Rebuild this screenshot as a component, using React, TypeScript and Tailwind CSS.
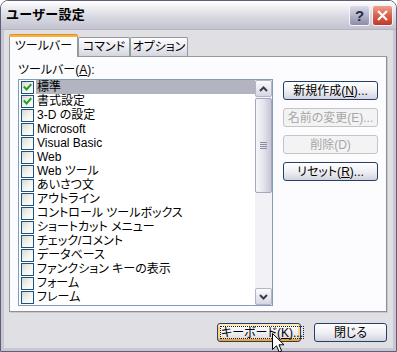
import React from "react";

type Item = { label: string; checked?: boolean; selected?: boolean };

const items: Item[] = [
  { label: "標準", checked: true, selected: true },
  { label: "書式設定", checked: true },
  { label: "3-D の設定" },
  { label: "Microsoft" },
  { label: "Visual Basic" },
  { label: "Web" },
  { label: "Web ツール" },
  { label: "あいさつ文" },
  { label: "アウトライン" },
  { label: "コントロール ツールボックス" },
  { label: "ショートカット メニュー" },
  { label: "チェック/コメント" },
  { label: "データベース" },
  { label: "ファンクション キーの表示" },
  { label: "フォーム" },
  { label: "フレーム" },
];

function Check({ checked }: { checked?: boolean }) {
  return (
    <span className="w-[13px] h-[13px] shrink-0 border border-[#1c5180] bg-gradient-to-br from-[#d8d8d2] via-[#f2f2ef] to-[#ffffff] flex items-center justify-center">
      {checked && (
        <svg width="9" height="9" viewBox="0 0 9 9">
          <path d="M1.5 4.2 L3.6 6.4 L7.6 1.8" stroke="#21a121" strokeWidth="2" fill="none" strokeLinecap="square" />
        </svg>
      )}
    </span>
  );
}

function Btn({
  children,
  disabled,
  className = "",
}: {
  children: React.ReactNode;
  disabled?: boolean;
  className?: string;
}) {
  const base = disabled
    ? "border-[#c4c4c8] bg-[#f3f3f3] text-[#a6a6a8]"
    : "border-[#22406a] bg-gradient-to-b from-[#ffffff] via-[#f0f0f4] to-[#d3d3de] text-black";
  return (
    <div className={`h-[19px] rounded-[3px] border flex items-center justify-center whitespace-nowrap ${base} ${className}`}>
      {children}
    </div>
  );
}

function Chevron({ up }: { up?: boolean }) {
  return (
    <svg width="9" height="6" viewBox="0 0 9 6">
      <path
        d={up ? "M1 5 L4.5 1.5 L8 5" : "M1 1 L4.5 4.5 L8 1"}
        stroke="#3c3c50"
        strokeWidth="2"
        fill="none"
      />
    </svg>
  );
}

export default function App() {
  return (
    <div className="w-[397px] h-[352px] bg-white relative overflow-hidden font-['Liberation_Sans','Noto_Sans_CJK_JP',sans-serif] text-[12px] leading-[14px] text-black">
      <div className="w-full h-full flex flex-col rounded-t-[8px] border border-[#5e5e78] overflow-hidden">
        {/* Title bar */}
        <div className="h-[29px] shrink-0 flex items-center pl-[5px] pr-[3px] bg-gradient-to-b from-[#ffffff] via-[#dcdce5] to-[#c3c3d0] border-b border-[#b5b5c4]">
          <span className="flex-1 text-[13px] font-bold leading-[16px] tracking-[0.2px]">ユーザー設定</span>
          <div className="w-[21px] h-[21px] rounded-[3px] border border-[#f4f4f8] bg-gradient-to-b from-[#dcdcea] via-[#b4b4cc] to-[#8c8caa] flex items-center justify-center text-[15px] font-bold text-[#2a2a3c] leading-none">
            ?
          </div>
          <div className="w-[21px] h-[21px] ml-[2px] rounded-[3px] border border-[#f4f4f8] bg-gradient-to-b from-[#f0a090] via-[#d8604c] to-[#c03828] flex items-center justify-center">
            <svg width="11" height="11" viewBox="0 0 11 11">
              <path d="M1 1 L10 10 M10 1 L1 10" stroke="#ffffff" strokeWidth="2.2" />
            </svg>
          </div>
        </div>

        {/* Body */}
        <div className="flex-1 flex flex-col border-x-[3px] border-b-[3px] border-[#c6c6d4] bg-[#e0dfe3] pl-[5px] pr-[6px] pt-[4px]">
          {/* Tabs */}
          <div className="h-[22px] flex items-end">
            <div className="relative z-10 w-[69px] h-[23px] -mb-[1px] rounded-t-[3px] border-x border-[#919b9c] bg-[#fcfcfe] flex flex-col">
              <div className="h-[3px] rounded-t-[3px] bg-[#f5b53a] border-t border-[#e68b2c] -mx-[1px]" />
              <div className="flex-1 flex items-center justify-center pb-[2px] [font-feature-settings:'palt']">ツールバー</div>
            </div>
            <div className="w-[52px] h-[19px] rounded-t-[2px] border-x border-t border-[#919b9c] bg-gradient-to-b from-[#fdfdfe] via-[#ececf2] to-[#d4d4de] flex items-center justify-center [font-feature-settings:'palt']">
              コマンド
            </div>
            <div className="w-[58px] h-[19px] rounded-t-[2px] border-x border-t border-[#919b9c] bg-gradient-to-b from-[#fdfdfe] via-[#ececf2] to-[#d4d4de] flex items-center justify-center [font-feature-settings:'palt']">
              オプション
            </div>
          </div>

          {/* Panel */}
          <div className="h-[256px] shrink-0 border border-[#919b9c] border-r-[#8e8e98] border-b-[#8e8e98] bg-[#fcfcfe] pl-[8px] pt-[6px] flex [font-feature-settings:'palt'] shadow-[1px_1px_0_#c8c8cc]">
            <div className="flex flex-col">
              <div className="h-[14px]">
                ツールバー(<span className="underline">A</span>):
              </div>
              <div className="mt-[2px] w-[255px] h-[227px] border border-[#7f9db9] bg-white flex">
                <div className="flex-1 flex flex-col">
                  {items.map((it) => (
                    <div key={it.label} className="h-[14px] flex items-center pl-[2px]">
                      <Check checked={it.checked} />
                      <span
                        className={`ml-[2px] flex-1 h-full pl-[1px] whitespace-nowrap ${
                          it.selected ? "bg-[#b2b4bf]" : ""
                        }`}
                      >
                        {it.label}
                      </span>
                    </div>
                  ))}
                </div>
                {/* Scrollbar */}
                <div className="w-[17px] flex flex-col bg-[#f1f1f6]">
                  <div className="h-[17px] rounded-[2px] border border-[#b4b4c6] bg-gradient-to-b from-[#fbfbfd] to-[#d6d6e0] flex items-center justify-center">
                    <Chevron up />
                  </div>
                  <div className="flex-1 flex flex-col">
                    <div className="mt-[1px] h-[95px] rounded-[2px] border border-[#a6a6bc] bg-gradient-to-r from-[#f6f6f9] via-[#e4e4ec] to-[#c6c6d6] flex flex-col items-center justify-center gap-[1px]">
                      <div className="w-[7px] h-[1px] bg-[#8c8ca4]" />
                      <div className="w-[7px] h-[1px] bg-[#8c8ca4]" />
                      <div className="w-[7px] h-[1px] bg-[#8c8ca4]" />
                      <div className="w-[7px] h-[1px] bg-[#8c8ca4]" />
                    </div>
                  </div>
                  <div className="h-[17px] rounded-[2px] border border-[#b4b4c6] bg-gradient-to-b from-[#fbfbfd] to-[#d6d6e0] flex items-center justify-center">
                    <Chevron />
                  </div>
                </div>
              </div>
            </div>
            <div className="ml-[10px] pt-[18px] flex flex-col gap-[8px]">
              <Btn className="w-[95px]">
                新規作成(<span className="underline">N</span>)...
              </Btn>
              <Btn className="w-[95px]" disabled>
                名前の変更(E)...
              </Btn>
              <Btn className="w-[95px]" disabled>
                削除(D)
              </Btn>
              <Btn className="w-[95px]">
                リセット(<span className="underline">R</span>)...
              </Btn>
            </div>
          </div>

          {/* Bottom buttons */}
          <div className="mt-[11px] flex justify-end gap-[13px] [font-feature-settings:'palt']">
            <div className="w-[84px] h-[19px] rounded-[3px] border border-[#22406a] bg-gradient-to-b from-[#ffffff] via-[#f0f0f4] to-[#d3d3de] flex p-[1px] shadow-[inset_0_-2px_0_#f3a22a,inset_0_2px_0_#ffeab8,inset_2px_0_0_#fbd486,inset_-2px_0_0_#fbd486]">
              <div className="flex-1 m-[1px] border border-dotted border-[#202020] flex items-center justify-center whitespace-nowrap">
                キーボード(<span className="underline">K</span>)...
              </div>
            </div>
            <Btn className="w-[73px]">閉じる</Btn>
          </div>
        </div>
      </div>

      {/* Mouse cursor */}
      <svg className="absolute left-[272px] top-[333px]" width="13" height="20" viewBox="0 0 13 20">
        <path d="M0.5 0.5 L0.5 16.5 L4.5 12.8 L7.2 19 L9.6 18 L7 11.8 L12 11.8 Z" fill="#ffffff" stroke="#000000" strokeWidth="1" />
      </svg>
    </div>
  );
}
